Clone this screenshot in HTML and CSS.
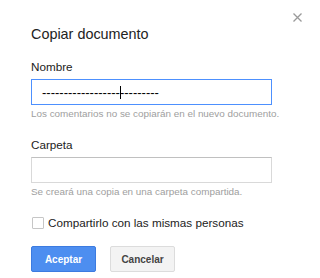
FILE: index.html
```html
<!DOCTYPE html>
<html lang="es">
<head>
<meta charset="utf-8">
<link rel="stylesheet" href="styles.css">
</head>
<body>
<div class="dialog">
  <button class="close" aria-label="Cerrar">
    <svg width="9" height="9" viewBox="0 0 9 9"><path d="M0.5 0.5 L8.5 8.5 M8.5 0.5 L0.5 8.5" stroke="#9a9a9a" stroke-width="1.3" fill="none"/></svg>
  </button>
  <div class="title">Copiar documento</div>
  <div class="field">
    <label class="label">Nombre</label>
    <div class="input focused"><span class="value">------------------</span><span class="caret"></span><span class="value">---------</span></div>
    <div class="hint">Los comentarios no se copiarán en el nuevo documento.</div>
  </div>
  <div class="field">
    <label class="label">Carpeta</label>
    <div class="input"></div>
    <div class="hint">Se creará una copia en una carpeta compartida.</div>
  </div>
  <div class="check-row">
    <span class="checkbox"></span>
    <span class="check-label">Compartirlo con las mismas personas</span>
  </div>
  <div class="buttons">
    <button class="btn primary">Aceptar</button>
    <button class="btn">Cancelar</button>
  </div>
</div>
</body>
</html>
```
FILE: styles.css
```css
html, body {
  margin: 0;
  padding: 0;
  background: #fff;
}
body {
  font-family: "Liberation Sans", Arial, sans-serif;
  color: #222;
}
.dialog {
  position: relative;
  width: 315px;
  height: 278px;
  box-sizing: border-box;
  padding: 26px 43px 0 31px;
}
.close {
  position: absolute;
  top: 13px;
  left: 293px;
  width: 9px;
  height: 9px;
  padding: 0;
  border: 0;
  background: none;
  display: flex;
}
.title {
  font-size: 14.4px;
  line-height: 17px;
  color: #222;
  margin-bottom: 17px;
}
.field {
  display: flex;
  flex-direction: column;
  margin-bottom: 18px;
}
.label {
  font-size: 11.7px;
  line-height: 14px;
  color: #222;
  margin-bottom: 5px;
}
.input {
  box-sizing: border-box;
  width: 241px;
  height: 26px;
  border: 1px solid #d9d9d9;
  border-top-color: #c0c0c0;
  display: flex;
  align-items: center;
  padding-left: 10px;
  font-size: 13px;
  color: #000;
}
.input.focused {
  border-color: #4d90fe;
}
.value {
  line-height: 13px;
}
.caret {
  display: inline-block;
  width: 1px;
  height: 13px;
  background: #000;
  margin: 0 -1px 0 0;
}
.hint {
  font-size: 9.9px;
  line-height: 12px;
  color: #9e9e9e;
  margin-top: 3px;
  white-space: nowrap;
}
.check-row {
  display: flex;
  align-items: center;
  gap: 4px;
  margin-top: 4px;
  padding-left: 1px;
}
.checkbox {
  box-sizing: border-box;
  width: 12px;
  height: 12px;
  border: 1px solid #c6c6c6;
  border-radius: 1px;
  background: #fff;
}
.check-label {
  font-size: 11.7px;
  line-height: 14px;
  color: #222;
}
.buttons {
  display: flex;
  gap: 14px;
  margin-top: 16px;
}
.btn {
  box-sizing: border-box;
  width: 65px;
  height: 26px;
  font-family: "Liberation Sans", Arial, sans-serif;
  font-size: 10px;
  font-weight: bold;
  color: #444;
  background: #f3f3f3;
  border: 1px solid #dcdcdc;
  border-radius: 2px;
  padding: 0;
}
.btn.primary {
  color: #fff;
  background: #4d8ef0;
  border-color: #3c7be0;
}
```
